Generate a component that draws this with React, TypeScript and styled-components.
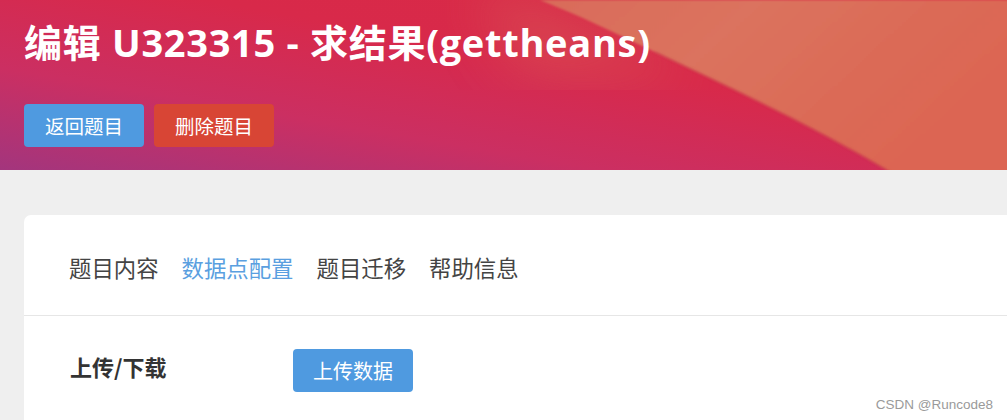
import * as React from 'react';
import styled, { createGlobalStyle } from 'styled-components';

const GlobalStyle = createGlobalStyle`
  html, body {
    margin: 0;
    padding: 0;
    background: #efefef;
    font-family: "Noto Sans CJK SC", "Noto Sans", sans-serif;
  }
`;

const Page = styled.div`
  position: relative;
  width: 100%;
  height: 420px;
  overflow: hidden;
  background: #efefef;
`;

const Banner = styled.header`
  position: relative;
  height: 170px;
  box-sizing: border-box;
  padding: 16px 24px 0 24px;
  overflow: hidden;
`;

const BannerArt = styled.svg`
  position: absolute;
  inset: 0;
  width: 100%;
  height: 100%;
  z-index: 0;
`;

const BannerContent = styled.div`
  position: relative;
  z-index: 1;
  display: flex;
  flex-direction: column;
  gap: 36px;
`;

const Title = styled.h1`
  margin: 0;
  color: #fff;
  font-family: "Open Sans", "Noto Sans CJK SC", sans-serif;
  font-weight: 700;
  font-size: 38px;
  letter-spacing: 0.7px;
  line-height: 52px;
  white-space: nowrap;
`;

const ButtonRow = styled.div`
  display: flex;
  gap: 10px;
`;

const Button = styled.button<{ $tone: 'blue' | 'red' }>`
  box-sizing: border-box;
  height: 43px;
  padding: 0 21px;
  border: none;
  border-radius: 4px;
  background: ${p => (p.$tone === 'blue' ? '#4f9ae0' : '#d84535')};
  color: #fff;
  font-family: "Noto Sans CJK SC", sans-serif;
  font-size: 19.5px;
  cursor: pointer;
`;

const Card = styled.section`
  height: 260px;
  margin: 45px -30px 0 24px;
  background: #fff;
  border-radius: 7px;
`;

const Tabs = styled.nav`
  display: flex;
  align-items: center;
  gap: 23px;
  height: 101px;
  padding: 0 45px;
  box-sizing: border-box;
  border-bottom: 1px solid #e6e6e6;
`;

const Tab = styled.span<{ $active?: boolean }>`
  font-size: 22.4px;
  line-height: 30px;
  padding-top: 3px;
  color: ${p => (p.$active ? '#5a9fe0' : '#444')};
  cursor: pointer;
`;

const FieldRow = styled.div`
  display: grid;
  grid-template-columns: 223px auto;
  align-items: center;
  padding: 33px 46px 0 46px;
`;

const FieldLabel = styled.span`
  font-size: 22px;
  font-weight: 700;
  color: #333;
  margin-top: -9px;
`;

const UploadButton = styled(Button)`
  justify-self: start;
  font-size: 20px;
  padding: 0 20px;
`;

const Watermark = styled.span`
  position: absolute;
  right: 14px;
  bottom: 8px;
  font-family: "Liberation Sans", Arial, sans-serif;
  font-size: 13.5px;
  color: #9a9a9a;
`;

export default function App() {
  return (
    <Page>
      <GlobalStyle />
      <Banner>
        <BannerArt viewBox="0 0 1007 170" preserveAspectRatio="none">
          <defs>
            <linearGradient id="base" x1="0" y1="1" x2="1" y2="0">
              <stop offset="0" stopColor="#a3357d" />
              <stop offset="0.3" stopColor="#cb2f62" />
              <stop offset="0.6" stopColor="#d8294a" />
              <stop offset="1" stopColor="#d92a44" />
            </linearGradient>
            <linearGradient id="warm" x1="0" y1="0" x2="1" y2="0.4">
              <stop offset="0" stopColor="#d96b5a" />
              <stop offset="0.4" stopColor="#db735e" />
              <stop offset="1" stopColor="#dc6552" />
            </linearGradient>
            <filter id="soft">
              <feGaussianBlur stdDeviation="1.2" />
            </filter>
            <filter id="wide">
              <feGaussianBlur stdDeviation="28" />
            </filter>
          </defs>
          <rect width="1007" height="170" fill="url(#base)" />
          <path d="M470 -20 C 540 10, 600 30, 640 48 L 700 80 L 520 70 Z" fill="#d85a58" opacity="0.6" filter="url(#wide)" />
          <path d="M540 0 C 590 20, 625 38, 655 52 C 740 92, 820 130, 890 172 L 1010 172 L 1010 0 Z" fill="url(#warm)" filter="url(#soft)" />
          <path d="M655 52 C 740 92, 820 130, 890 172" fill="none" stroke="#c9434c" strokeWidth="1.5" opacity="0.5" filter="url(#soft)" />
        </BannerArt>
        <BannerContent>
          <Title>编辑 U323315 - 求结果(gettheans)</Title>
          <ButtonRow>
            <Button $tone="blue">返回题目</Button>
            <Button $tone="red">删除题目</Button>
          </ButtonRow>
        </BannerContent>
      </Banner>
      <Card>
        <Tabs>
          <Tab>题目内容</Tab>
          <Tab $active>数据点配置</Tab>
          <Tab>题目迁移</Tab>
          <Tab>帮助信息</Tab>
        </Tabs>
        <FieldRow>
          <FieldLabel>上传/下载</FieldLabel>
          <UploadButton $tone="blue">上传数据</UploadButton>
        </FieldRow>
      </Card>
      <Watermark>CSDN @Runcode8</Watermark>
    </Page>
  );
}
